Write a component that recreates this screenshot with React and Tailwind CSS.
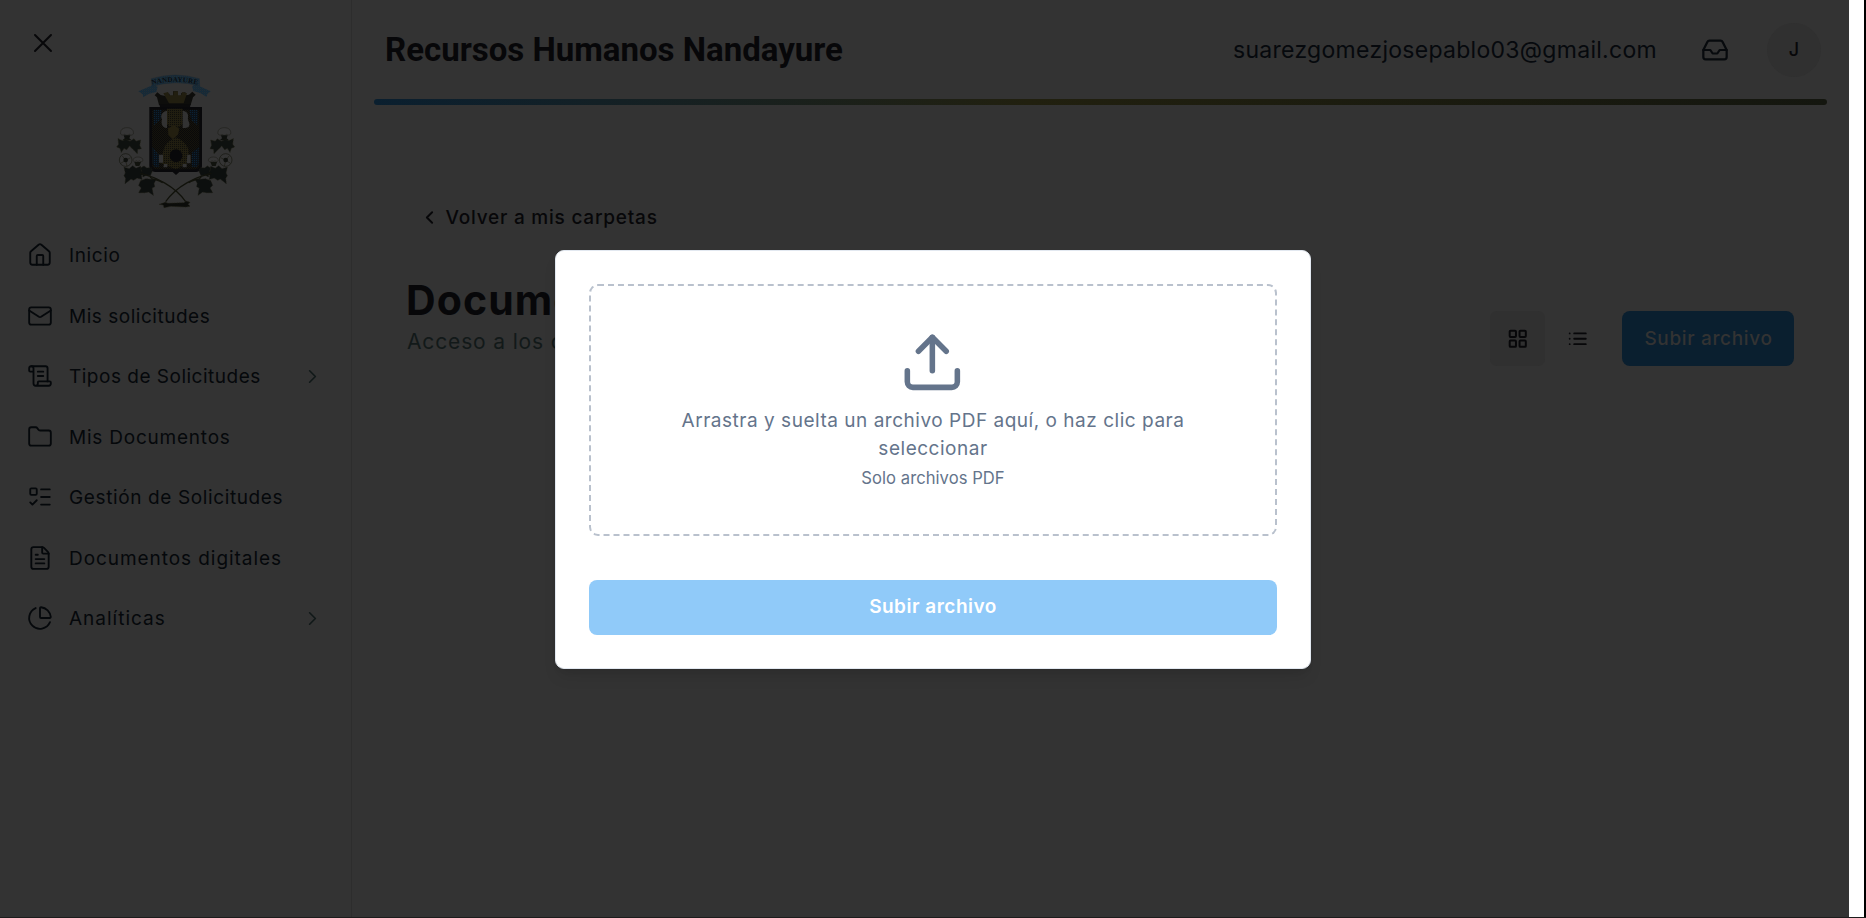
import {
  House,
  Mail,
  ScrollText,
  Folder,
  ListTodo,
  FileText,
  ChartPie,
  ChevronRight,
  ChevronLeft,
  Inbox,
  LayoutGrid,
  Upload,
} from 'lucide-react';

const NAV = [
  { label: 'Inicio', icon: House, tracking: 'tracking-[0.6px]' },
  { label: 'Mis solicitudes', icon: Mail, tracking: 'tracking-[0.52px]' },
  { label: 'Tipos de Solicitudes', icon: ScrollText, tracking: 'tracking-[0.5px]', chevron: true },
  { label: 'Mis Documentos', icon: Folder, tracking: 'tracking-[0.78px]' },
  { label: 'Gestión de Solicitudes', icon: ListTodo, tracking: 'tracking-[0.62px]' },
  { label: 'Documentos digitales', icon: FileText, tracking: 'tracking-[0.94px]' },
  { label: 'Analíticas', icon: ChartPie, tracking: 'tracking-[1px]', chevron: true },
];

function Branch() {
  return (
    <g>
      {/* cotton bolls and flower */}
      <path d="M62 222c-2-12 6-19 19-19s21 7 19 19c-4 5-10 4-12 1-4 4-10 4-14 0-3 3-9 3-12-1z" fill="#353535" stroke="#1c1d16" strokeWidth="1.6" />
      <path d="M71 226l20 0-3 9 7 6-28 0 7-6z" fill="#0d0f0c" />
      <path d="M54 236l14 6 10-4 12 6 12-8 6 8 14-4-3 16 5 10-11 2-1 13-10-10-8-8-5-6-9 12-8-4-8 12-4-12-10-4 6-8z" fill="#0e110f" stroke="#1d1c10" strokeWidth="2" strokeDasharray="3 2" />
      <circle cx="77" cy="300" r="19" fill="#343434" stroke="#15160f" strokeWidth="2" />
      <path d="M77 301l-10-13M77 301l15-8M77 301l-15 9M77 301l4 18" stroke="#1c1d14" strokeWidth="2" />
      <circle cx="77" cy="300" r="7" fill="#0d0f0c" />
      <path d="M99 302c0-8 7-11 15-11s15 3 15 11c-4 5-9 3-11 0-3 3-6 3-9 0-3 3-7 3-10 0z" fill="#353535" stroke="#1c1d16" strokeWidth="1.6" />
      <path d="M103 306l20 0-5 12-11 0z" fill="#11130e" />
      {/* leaves */}
      <path d="M72 322l16 4 10-9 10 8 14-6 2 14 14 5-14 8 2 12-15-4-10 7-8-4-18 14 2-16-5-8 4-8z" fill="#0c0f0e" stroke="#1a1a10" strokeWidth="2" strokeDasharray="3 2" />
      <path d="M122 324l10-6 8 6 14-1 3 10-6 14-12-2-10 6-2-12z" fill="#0c0f0e" stroke="#1a1a10" strokeWidth="2" strokeDasharray="3 2" />
      <path d="M122 362l16-6 14 2 18-2-8 14 2 10-8 4 4 22-14-10-12 2-18 0 8-14-8-8z" fill="#0c0f0e" stroke="#1a1a10" strokeWidth="2" strokeDasharray="3 2" />
      {/* stem */}
      <path d="M120 340c45 10 105 38 137 85M150 352c12 10 22 6 38 16" fill="none" stroke="#11120b" strokeWidth="3.5" />
    </g>
  );
}

function Crest() {
  return (
    <svg width="150" height="160" viewBox="0 0 450 480" className="mr-[2px] shrink-0">
      <defs>
        <pattern id="weave" width="6" height="6" patternUnits="userSpaceOnUse">
          <rect width="6" height="6" fill="#15130b" />
          <rect width="3" height="3" fill="#09090a" />
          <rect x="3" y="3" width="3" height="3" fill="#09090a" />
        </pattern>
        <pattern id="gold" width="6" height="6" patternUnits="userSpaceOnUse">
          <rect width="6" height="6" fill="#201d10" />
          <rect width="3" height="3" fill="#0e0e0b" />
        </pattern>
        <pattern id="sea" width="6" height="6" patternUnits="userSpaceOnUse">
          <rect width="6" height="6" fill="#0a1016" />
          <rect width="3" height="3" fill="#0b2133" />
        </pattern>
        <pattern id="ribbon" width="6" height="6" patternUnits="userSpaceOnUse">
          <rect width="6" height="6" fill="#122a3b" />
          <rect width="3" height="3" fill="#242c30" />
          <rect x="3" y="3" width="3" height="3" fill="#1c2a33" />
        </pattern>
        <path id="arc" d="M156 74Q225 56 298 75" />
      </defs>
      {/* ribbon */}
      <path d="M115 94l46-20 12 6-4 16-22 5-17 11-2-9z" fill="url(#ribbon)" />
      <path d="M332 94l-46-21-10 6 4 14 22 7 18 11 2-9z" fill="url(#ribbon)" />
      <path d="M154 56Q226 34 298 56L299 78Q226 58 156 79z" fill="url(#ribbon)" stroke="#142430" strokeWidth="1" />
      <text fontSize="21" fontWeight="700" fontFamily="Liberation Serif, serif" fill="#080c10">
        <textPath href="#arc" textLength="138">NANDAYURE</textPath>
      </text>
      {/* crown */}
      <path d="M164 106l8-9 10 8 14 3-2-9 14 2 2 8h9V94h14v14h9l2-9 12-2 1 9 10-2 10-9 10 9-8 8-7 23H177l-6-23z" fill="#0d0d0b" />
      <path d="M190 100l14-4 4 10h12V94h14v12h9l4-10 14 4-10 30h-44z" fill="#211e10" />
      <path d="M178 133h94l-3 12h-88z" fill="#0a0a0b" />
      {/* shield */}
      <path d="M148 141h158v176c0 12-10 19-22 19h-46l-10 9-10-9h-47c-14 0-23-7-23-19z" fill="#08080a" />
      <path d="M156 149h142v166c0 9-7 13-15 13H171c-9 0-15-5-15-13z" fill="url(#weave)" />
      <path d="M160 150h26l-6 30-18 16zM294 150h-26l6 30 18 16zM158 262l18 22v36h-12l-6-8zM296 262l-20 16v42h14l6-8z" fill="url(#sea)" />
      <path d="M201 146h47v46c-8 10-14 6-22 18-6-12-18-8-25-18z" fill="url(#gold)" />
      <path d="M186 178c-6-12 0-22 15-26v52c-10 2-20-10-15-26zM248 152c11 2 18 8 16 20-2 10 6 16 4 24s-8 8-20 8z" fill="#323232" />
      <path d="M204 205l18-9 16 10-4 18-16 14-13-14z" fill="#231f10" />
      <path d="M228 232c24 10 40 30 38 46l6 26-44 24-48-20 10-34c4-20 16-32 38-42z" fill="url(#gold)" />
      <circle cx="228" cy="287" r="19" fill="#08080a" />
      <path d="M177 284h12v24h-12zM262 284h10v26h-12zM192 312h10v10h-12zM248 312h12v10h-12z" fill="#323232" />
      {/* cotton branches */}
      <Branch />
      <g transform="translate(454 0) scale(-1 1)">
        <Branch />
      </g>
      <path d="M178 433l18-6 8 3 48-2 6-5 12 4-6 6 6 6-12 2-46-2-20 4-2-8z" fill="#0b0c0a" stroke="#1d1c10" strokeWidth="2" strokeDasharray="3 2" />
    </svg>
  );
}

function Sidebar() {
  return (
    <aside className="flex w-[352px] shrink-0 flex-col border-r border-[#2d2d2d]">
      <div className="flex h-[60px] items-end pb-[8px] pl-[34px]">
        <svg width="18" height="18" viewBox="0 0 18 18" fill="none" stroke="#070709" strokeWidth="1.9" strokeLinecap="round">
          <path d="M1 1l16 16M17 1L1 17" />
        </svg>
      </div>
      <div className="flex justify-center">
        <Crest />
      </div>
      <nav className="mt-[5px] flex flex-col">
        {NAV.map(({ label, icon: Icon, tracking, chevron }) => (
          <a key={label} className="flex h-[60.5px] items-center pr-[27px] pl-[27px] text-[#05080b]">
            <Icon size={26} strokeWidth={1.7} className="shrink-0" />
            <span className={`ml-[16px] flex-1 pt-[2px] text-[19px] leading-7 whitespace-nowrap ${tracking}`}>{label}</span>
            {chevron && <ChevronRight size={23} strokeWidth={1.7} className="mt-px text-[#101818]" />}
          </a>
        ))}
      </nav>
    </aside>
  );
}

function Header() {
  return (
    <header className="px-[22px]">
      <div className="flex h-[99px] items-center justify-between pr-[6px] pl-[11px]">
        <h1 className="font-[Roboto,sans-serif] text-[33px] leading-10 font-bold text-[#070709]">
          Recursos Humanos Nandayure
        </h1>
        <div className="flex items-center">
          <span className="text-[23px] leading-8 tracking-[0.29px] text-[#06090d]">suarezgomezjosepablo03@gmail.com</span>
          <Inbox size={28} strokeWidth={1.9} className="ml-[43.5px] text-[#070a0d]" />
          <div className="ml-[38.5px] flex h-[54px] w-[54px] items-center justify-center rounded-full bg-[#303030] text-[18px] font-medium text-[#070709]">
            J
          </div>
        </div>
      </div>
      <div className="h-[6px] rounded-full bg-linear-to-r from-[#0a1f2f] via-[#21200f] via-45% to-[#14160f]" />
    </header>
  );
}

function Toolbar() {
  return (
    <div className="flex items-center">
      <button className="flex size-[55px] items-center justify-center rounded-[7px] bg-[#303030] text-[#070709]">
        <LayoutGrid size={21.5} strokeWidth={2.2} />
      </button>
      <button className="ml-[5px] flex size-[55px] items-center justify-center text-[#070709]">
        <svg width="21.5" height="21.5" viewBox="0 0 24 24" fill="none" stroke="currentColor" strokeWidth="2" strokeLinecap="round">
          <path d="M8 6h13M8 12h13M8 18h13M3 6h.01M3 12h.01M3 18h.01" />
        </svg>
      </button>
      <button className="ml-[17px] flex h-[55px] w-[172px] items-center justify-center rounded-[8px] bg-[#0a1f2f] pt-[2px] pl-px text-[19px] font-medium tracking-[0.66px] text-[#333333]">
        Subir archivo
      </button>
    </div>
  );
}

function UploadDialog() {
  return (
    <div className="absolute inset-0 flex items-center justify-center">
      <div className="flex h-[419px] w-[756px] flex-col rounded-[9px] border border-[#e2e8f0] bg-white px-[33px] pt-[33px] shadow-lg">
        <div className="flex h-[252px] flex-col items-center rounded-[9px] border-2 border-dashed border-[#b9c1cd] px-[86px] pt-[43.5px] text-center text-[#64748b]">
          <Upload size={66.7} strokeWidth={2} className="mr-px shrink-0" />
          <p className="mt-[11.5px] text-[19px] leading-[28.2px] tracking-[0.52px]">
            Arrastra y suelta un archivo PDF aquí, o haz clic para seleccionar
          </p>
          <p className="mt-[2px] text-[16.6px] leading-6 tracking-[0.05px]">Solo archivos PDF</p>
        </div>
        <button className="mt-[44px] h-[55px] rounded-[8px] bg-[#90caf9] text-[19px] font-semibold tracking-[0.5px] text-white">
          Subir archivo
        </button>
      </div>
    </div>
  );
}

export default function App() {
  return (
    <div className="h-[918px] w-[1866px] overflow-hidden bg-[#1c1c1c] font-[Inter,sans-serif]">
      <div className="flex h-[917px]">
        <div className="flex w-[1849px] shrink-0 bg-[#333333]">
          <Sidebar />
          <main className="flex min-w-0 flex-1 flex-col">
            <Header />
            <a className="mt-[98px] ml-[66.5px] flex h-7 items-center text-[19px] font-medium text-[#070709]">
              <ChevronLeft size={21} strokeWidth={2.2} />
              <span className="ml-[6px] pt-[2px] tracking-[0.78px]">Volver a mis carpetas</span>
            </a>
            <section className="mt-[41px] flex items-start justify-between pr-[55px] pl-[54px]">
              <div>
                <h2 className="text-[41px] leading-[56px] font-bold tracking-[1.1px] text-[#070709]">Documentos</h2>
                <p className="pl-px text-[21px] leading-7 tracking-[0.85px] text-[#121919]">Acceso a los documentos</p>
              </div>
              <div className="mt-[39px]">
                <Toolbar />
              </div>
            </section>
          </main>
        </div>
        <div className="w-[15px] shrink-0 bg-white" />
        <div className="w-[2px] shrink-0 bg-black" />
      </div>
      <UploadDialog />
    </div>
  );
}
